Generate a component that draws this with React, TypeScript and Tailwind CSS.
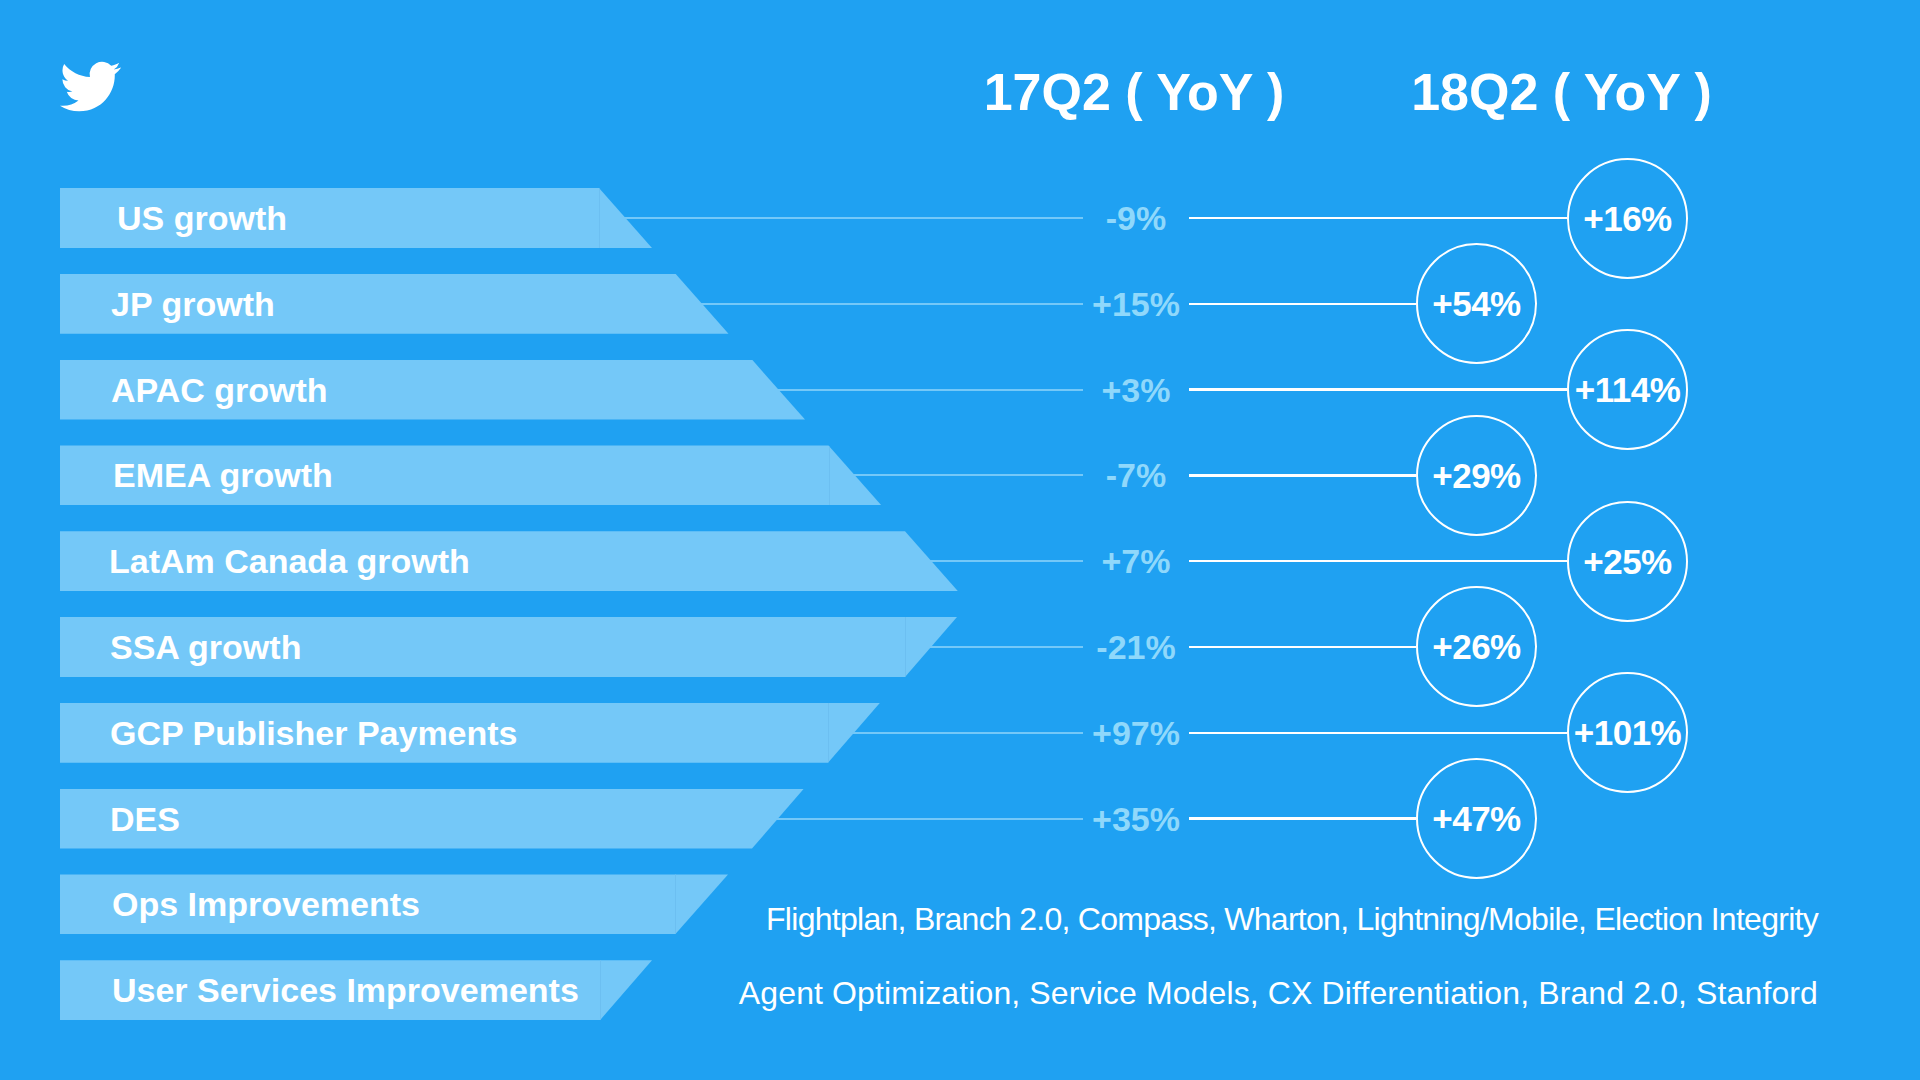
import type { CSSProperties } from "react";

interface Row {
  label: string;
  top: number; // x of the bar's top-right corner
  bottom: number; // x of the bar's bottom-right corner
  indent: number;
  seam?: boolean;
  prev?: string;
  next?: string;
  far?: boolean;
  note?: string;
  notePad?: number;
  noteTracking?: number;
}

const BAR_LEFT = 60;

const rows: Row[] = [
  { label: "US growth", top: 599, bottom: 652, indent: 57, seam: true, prev: "-9%", next: "+16%", far: true },
  { label: "JP growth", top: 675.5, bottom: 728.5, indent: 51, prev: "+15%", next: "+54%" },
  { label: "APAC growth", top: 752, bottom: 805, indent: 51, prev: "+3%", next: "+114%", far: true },
  { label: "EMEA growth", top: 828.5, bottom: 881.5, indent: 53, seam: true, prev: "-7%", next: "+29%" },
  { label: "LatAm Canada growth", top: 905, bottom: 958, indent: 49, prev: "+7%", next: "+25%", far: true },
  { label: "SSA growth", top: 957, bottom: 905, indent: 50, seam: true, prev: "-21%", next: "+26%" },
  { label: "GCP Publisher Payments", top: 880, bottom: 828, indent: 50, seam: true, prev: "+97%", next: "+101%", far: true },
  { label: "DES", top: 804, bottom: 752, indent: 50, prev: "+35%", next: "+47%" },
  {
    label: "Ops Improvements",
    top: 728,
    bottom: 675,
    indent: 52,
    seam: true,
    note: "Flightplan, Branch 2.0, Compass, Wharton, Lightning/Mobile, Election Integrity",
    notePad: 29,
    noteTracking: -0.72,
  },
  {
    label: "User Services Improvements",
    top: 652,
    bottom: 600,
    indent: 52,
    seam: true,
    note: "Agent Optimization, Service Models, CX Differentiation, Brand 2.0, Stanford",
    notePad: 17,
    noteTracking: 0.12,
  },
];

function TwitterBird() {
  return (
    <svg viewBox="0 0 24 24" className="h-[61px] w-[61px] shrink-0 fill-white" aria-label="Twitter">
      <path d="M23.953 4.57a10 10 0 0 1-2.825.775 4.958 4.958 0 0 0 2.163-2.723c-.951.555-2.005.959-3.127 1.184a4.92 4.92 0 0 0-8.384 4.482C7.69 8.095 4.067 6.13 1.64 3.162a4.822 4.822 0 0 0-.666 2.475c0 1.71.87 3.213 2.188 4.096a4.904 4.904 0 0 1-2.228-.616v.06a4.923 4.923 0 0 0 3.946 4.827 4.996 4.996 0 0 1-2.212.085 4.936 4.936 0 0 0 4.604 3.417 9.867 9.867 0 0 1-6.102 2.105c-.39 0-.779-.023-1.17-.067a13.995 13.995 0 0 0 7.557 2.209c9.053 0 13.998-7.496 13.998-13.985 0-.21 0-.42-.015-.63A9.935 9.935 0 0 0 24 4.59z" />
    </svg>
  );
}

function Bar({ row }: { row: Row }) {
  const width = Math.max(row.top, row.bottom) - BAR_LEFT;
  const topX = row.top - BAR_LEFT;
  const bottomX = row.bottom - BAR_LEFT;
  const style: CSSProperties = {
    width,
    clipPath: `polygon(0 0, ${topX}px 0, ${bottomX}px 100%, 0 100%)`,
  };
  return (
    <div className="relative z-10 flex h-[60px] shrink-0 items-center bg-[#74c8f8]" style={style}>
      {row.seam && (
        <div
          className="absolute inset-y-0 w-px bg-[#6cbff1]"
          style={{ left: Math.min(topX, bottomX) }}
        />
      )}
      <span
        className="whitespace-nowrap text-[34px] font-bold leading-none text-white"
        style={{ paddingLeft: row.indent }}
      >
        {row.label}
      </span>
    </div>
  );
}

function Circle({ value }: { value: string }) {
  return (
    <div className="flex h-[121px] w-[121px] shrink-0 items-center justify-center rounded-full border-[2.5px] border-white">
      <span className="text-[35px] font-bold leading-none tracking-[-0.5px] text-white">{value}</span>
    </div>
  );
}

function GrowthRow({ row }: { row: Row }) {
  if (row.note) {
    return (
      <div className="flex h-[60px] items-center justify-between pr-[102px]">
        <Bar row={row} />
        <p
          className="shrink-0 self-start whitespace-nowrap text-[32px] leading-[32px] text-white"
          style={{ paddingTop: row.notePad, letterSpacing: row.noteTracking }}
        >
          {row.note}
        </p>
      </div>
    );
  }

  return (
    <div className="flex h-[60px] items-center">
      <div className="flex w-[1023px] items-center">
        <Bar row={row} />
        <div className="-ml-[60px] h-[2px] flex-1 bg-[#74c8f8]" />
      </div>
      <div className="w-[106px] text-center text-[34px] font-bold leading-none text-[#8fd8fb]">
        {row.prev}
      </div>
      <div className="flex w-[499px] items-center">
        <div className="h-[2.5px] flex-1 bg-white" />
        <Circle value={row.next!} />
        {!row.far && <div className="w-[151px] shrink-0" />}
      </div>
    </div>
  );
}

export default function App() {
  return (
    <div className="h-[1080px] w-[1920px] overflow-hidden bg-[#1fa1f2] pl-[60px] font-['Liberation_Sans',Arial,sans-serif]">
      <header className="flex h-[188px] items-start">
        <div className="mt-[56px]">
          <TwitterBird />
        </div>
        <h2 className="ml-[833px] mt-[66px] w-[360px] whitespace-nowrap text-center text-[52px] font-bold leading-[52px] text-white">
          17Q2 ( YoY )
        </h2>
        <h2 className="ml-[67.5px] mt-[66px] w-[360px] whitespace-nowrap text-center text-[52px] font-bold leading-[52px] text-white">
          18Q2 ( YoY )
        </h2>
      </header>

      <section className="flex flex-col gap-[25.8px]" aria-label="Growth by region">
        {rows.map((row) => (
          <GrowthRow key={row.label} row={row} />
        ))}
      </section>
    </div>
  );
}
